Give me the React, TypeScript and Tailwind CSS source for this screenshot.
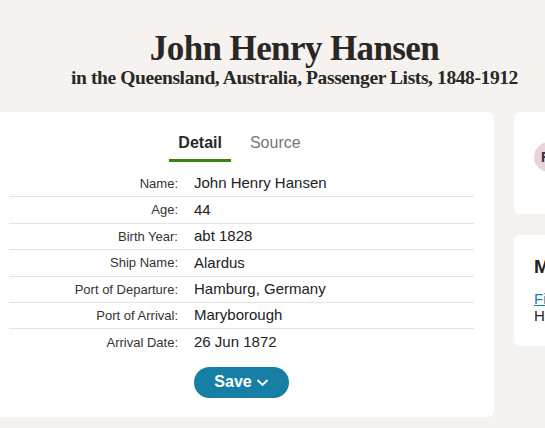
import React from "react";

const rows: [string, string][] = [
  ["Name:", "John Henry Hansen"],
  ["Age:", "44"],
  ["Birth Year:", "abt 1828"],
  ["Ship Name:", "Alardus"],
  ["Port of Departure:", "Hamburg, Germany"],
  ["Port of Arrival:", "Maryborough"],
  ["Arrival Date:", "26 Jun 1872"],
];

export default function App() {
  return (
    <div
      className="w-[545px] h-[428px] overflow-hidden bg-[#f5f2ef] text-[#222]"
      style={{ fontFamily: '"Liberation Sans", Arial, sans-serif' }}
    >
      <header
        className="pl-[44px] pt-[31px] h-[112px] text-center text-[#2a2724]"
        style={{ fontFamily: '"Liberation Serif", "Times New Roman", serif' }}
      >
        <h1 className="text-[35px] font-bold leading-[36px] tracking-[-0.6px]">John Henry Hansen</h1>
        <p className="text-[19.5px] font-bold leading-[24px] tracking-[-0.4px] mt-[-1px]">
          in the Queensland, Australia, Passenger Lists, 1848-1912
        </p>
      </header>
      <div className="flex gap-[20px] ml-[-11px]">
        <section className="w-[505px] shrink-0 h-[305px] bg-white rounded-[6px] px-[20px] pt-[20px]">
          <div className="flex justify-center">
            <div className="px-[9px] h-[30px] border-b-[3px] border-[#3b8212] text-[16px] font-bold text-[#2a2a2a] leading-[22px]">
              Detail
            </div>
            <div className="pl-[19px] pr-[13px] h-[30px] text-[16px] text-[#777] leading-[22px]">Source</div>
          </div>
          <div className="mt-[9px]">
            {rows.map(([k, v], i) => (
              <div
                key={k}
                className={
                  "flex items-center h-[26.4px] " +
                  (i < rows.length - 1 ? "border-b border-[#e3e3e3]" : "")
                }
              >
                <div className="w-[169px] text-right text-[13px] text-[#333]">{k}</div>
                <div className="pl-[16px] text-[15px] text-[#222]">{v}</div>
              </div>
            ))}
          </div>
          <div className="pl-[185px] mt-[11px]">
            <button className="w-[95px] h-[31px] rounded-full bg-[#177fa6] text-white text-[16px] font-bold flex items-center justify-center gap-[4px]">
              Save
              <svg width="13" height="9" viewBox="0 0 13 9" fill="none">
                <path d="M1.5 2 L6.5 7 L11.5 2" stroke="white" strokeWidth="1.8" />
              </svg>
            </button>
          </div>
        </section>
        <div className="flex flex-col gap-[21px] w-[200px] shrink-0">
          <div className="h-[102px] bg-white rounded-[6px] px-[20px] pt-[30px]">
            <div className="w-[36px] h-[30px] rounded-full bg-[#e9d3dc] flex items-center pl-[7px] text-[14px] font-bold text-[#333]">
              FH
            </div>
          </div>
          <div className="h-[111px] bg-white rounded-[6px] px-[20px] pt-[20px]">
            <div className="text-[19px] font-bold text-[#222] leading-[24px]">More</div>
            <div className="mt-[11px] text-[15px] leading-[17px]">
              <a className="text-[#177fa6] underline">Find</a>
              <div className="text-[#222]">Hans</div>
            </div>
          </div>
        </div>
      </div>
    </div>
  );
}
